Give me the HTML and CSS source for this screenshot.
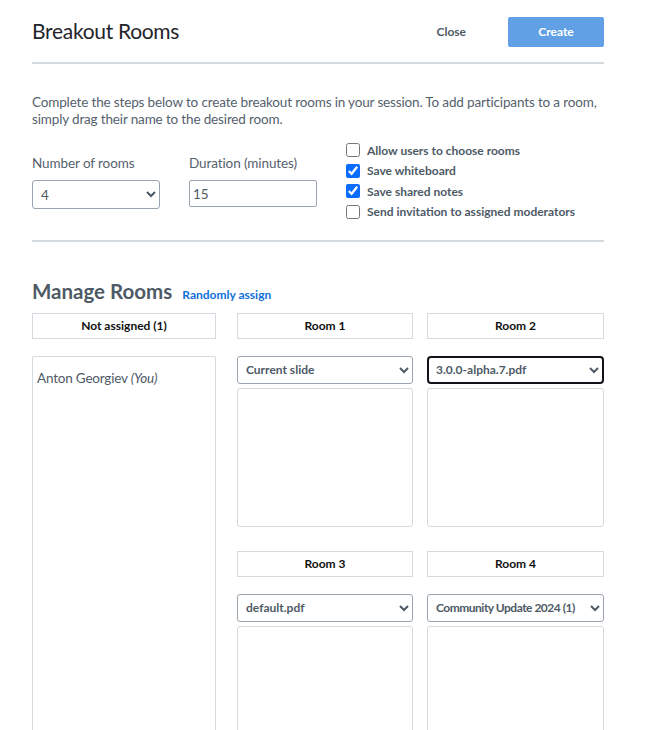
FILE: index.html
```html
<!DOCTYPE html>
<html lang="en">
<head>
<meta charset="utf-8">
<title>Breakout Rooms</title>
<link rel="stylesheet" href="styles.css">
</head>
<body>
<div class="modal">
  <header class="head">
    <h1 class="title">Breakout Rooms</h1>
    <div class="actions">
      <button class="btn-close" type="button">Close</button>
      <button class="btn-create" type="button">Create</button>
    </div>
  </header>
  <div class="sep"></div>
  <p class="desc">Complete the steps below to create breakout rooms in your session. To add participants to a room, simply drag their name to the desired room.</p>
  <div class="settings">
    <div class="field">
      <label class="field-label" for="num">Number of rooms</label>
      <select id="num" class="num-select">
        <option>2</option><option>3</option><option selected>4</option><option>5</option>
      </select>
    </div>
    <div class="field">
      <label class="field-label" for="dur">Duration (minutes)</label>
      <input id="dur" class="dur-input" type="text" value="15">
    </div>
    <div class="checks">
      <label class="check"><input type="checkbox"><span>Allow users to choose rooms</span></label>
      <label class="check"><input type="checkbox" checked><span>Save whiteboard</span></label>
      <label class="check"><input type="checkbox" checked><span>Save shared notes</span></label>
      <label class="check"><input type="checkbox"><span>Send invitation to assigned moderators</span></label>
    </div>
  </div>
  <div class="sep sep-2"></div>
  <div class="manage-head">
    <h2 class="manage-title">Manage Rooms</h2>
    <a class="random-link" href="#">Randomly assign</a>
  </div>
  <div class="rooms">
    <div class="unassigned">
      <div class="room-header">Not assigned (1)</div>
      <div class="user-list">
        <div class="user">Anton Georgiev <em>(You)</em></div>
      </div>
    </div>
    <div class="room-grid">
      <div class="room">
        <div class="room-header">Room 1</div>
        <select class="pres-select"><option>Current slide</option></select>
        <div class="room-box"></div>
      </div>
      <div class="room">
        <div class="room-header">Room 2</div>
        <select class="pres-select focused"><option>3.0.0-alpha.7.pdf</option></select>
        <div class="room-box"></div>
      </div>
      <div class="room">
        <div class="room-header">Room 3</div>
        <select class="pres-select"><option>default.pdf</option></select>
        <div class="room-box"></div>
      </div>
      <div class="room">
        <div class="room-header">Room 4</div>
        <select class="pres-select tight"><option>Community Update 2024 (1)</option></select>
        <div class="room-box"></div>
      </div>
    </div>
  </div>
</div>
</body>
</html>
```

FILE: styles.css
```css
* { box-sizing: border-box; }
html, body { margin: 0; padding: 0; background: #fff; }
body {
  font-family: "Lato", "Source Sans Pro", "Noto Sans", sans-serif;
  color: #4e5a66;
  overflow: hidden;
}
.modal {
  width: 604px;
  padding: 17px 0 0 32px;
}
.head {
  display: flex;
  align-items: center;
  justify-content: space-between;
  height: 30px;
}
.title {
  margin: 0;
  padding-bottom: 3px;
  font-size: 21px;
  font-weight: 400;
  color: #1f252b;
  letter-spacing: -0.3px;
}
.actions { display: flex; align-items: center; gap: 28px; }
.btn-close {
  font-family: inherit;
  border: 0;
  background: none;
  font-size: 12px;
  font-weight: 700;
  color: #4e5a66;
  padding: 0 14px 2px;
  height: 30px;
}
.btn-create {
  font-family: inherit;
  width: 96px;
  height: 30px;
  border: 0;
  border-radius: 2px;
  background: #62a0e6;
  color: #fff;
  font-size: 12px;
  font-weight: 700;
  padding: 0 0 2px;
}
.sep {
  height: 2px;
  background: #d5dae0;
  margin-top: 15px;
}
.desc {
  margin: 30px 0 0;
  font-size: 13.5px;
  letter-spacing: -0.15px;
  line-height: 17px;
  color: #55616d;
}
.settings {
  display: flex;
  align-items: center;
  margin-top: 15px;
}
.field {
  display: flex;
  flex-direction: column;
  width: 128px;
  margin-right: 29px;
  padding-top: 3px;
}
.field-label {
  font-size: 13.5px;
  letter-spacing: -0.1px;
  line-height: 17px;
  margin-bottom: 8px;
  color: #55616d;
}
.num-select {
  font-family: inherit;
  height: 29px;
  font-size: 13.5px;
  color: #4e5a66;
  border: 1px solid #9aa4ae;
  border-radius: 3px;
  padding: 0 4px;
  background: #fff;
}
.dur-input {
  font-family: inherit;
  height: 27px;
  font-size: 13.5px;
  color: #4e5a66;
  border: 1px solid #9aa4ae;
  border-radius: 2px;
  padding: 0 3px;
  margin-bottom: 2px;
}
.checks {
  display: flex;
  flex-direction: column;
  gap: 6.5px;
}
.check {
  display: flex;
  align-items: center;
  font-size: 12px;
  font-weight: 700;
  height: 14px;
  color: #4e5a66;
}
.check input {
  width: 14px;
  height: 14px;
  margin: 0 7px 0 0;
  accent-color: #0a6cff;
}
.sep-2 { margin-top: 21px; }
.manage-head {
  display: flex;
  align-items: baseline;
  gap: 10px;
  margin-top: 37px;
  height: 24px;
}
.manage-title {
  margin: 0;
  font-size: 20.5px;
  line-height: 24px;
  font-weight: 700;
  color: #4e5a66;
}
.random-link {
  font-size: 12px;
  font-weight: 700;
  color: #0f70d7;
  text-decoration: none;
}
.rooms {
  display: flex;
  align-items: flex-start;
  gap: 21px;
  margin-top: 10px;
}
.unassigned { width: 184px; flex: none; }
.room-header {
  height: 26px;
  border: 1px solid #d5dae0;
  display: flex;
  align-items: center;
  justify-content: center;
  font-size: 12px;
  font-weight: 700;
  color: #111;
}
.user-list {
  margin-top: 17px;
  height: 420px;
  border: 1px solid #d5dae0;
  border-radius: 2px;
  padding: 13px 4px;
}
.user {
  font-size: 13.5px;
  letter-spacing: -0.2px;
  color: #4e5a66;
}
.room-grid {
  display: grid;
  grid-template-columns: 176px 177px;
  align-content: start;
  column-gap: 14px;
  row-gap: 24px;
}
.room { display: flex; flex-direction: column; }
.pres-select {
  font-family: inherit;
  margin-top: 17px;
  height: 28px;
  border: 1px solid #9aa4ae;
  border-radius: 3px;
  background: #fff;
  font-size: 12px;
  font-weight: 700;
  color: #4e5a66;
  padding: 0 4px;
}
.pres-select.tight { letter-spacing: -0.5px; padding-right: 0; }
.pres-select.focused {
  border: 2px solid #101418;
  border-radius: 4px;
  padding: 0 3px;
}
.room-box {
  margin-top: 4px;
  height: 139px;
  border: 1px solid #d5dae0;
  border-radius: 3px;
}
```
